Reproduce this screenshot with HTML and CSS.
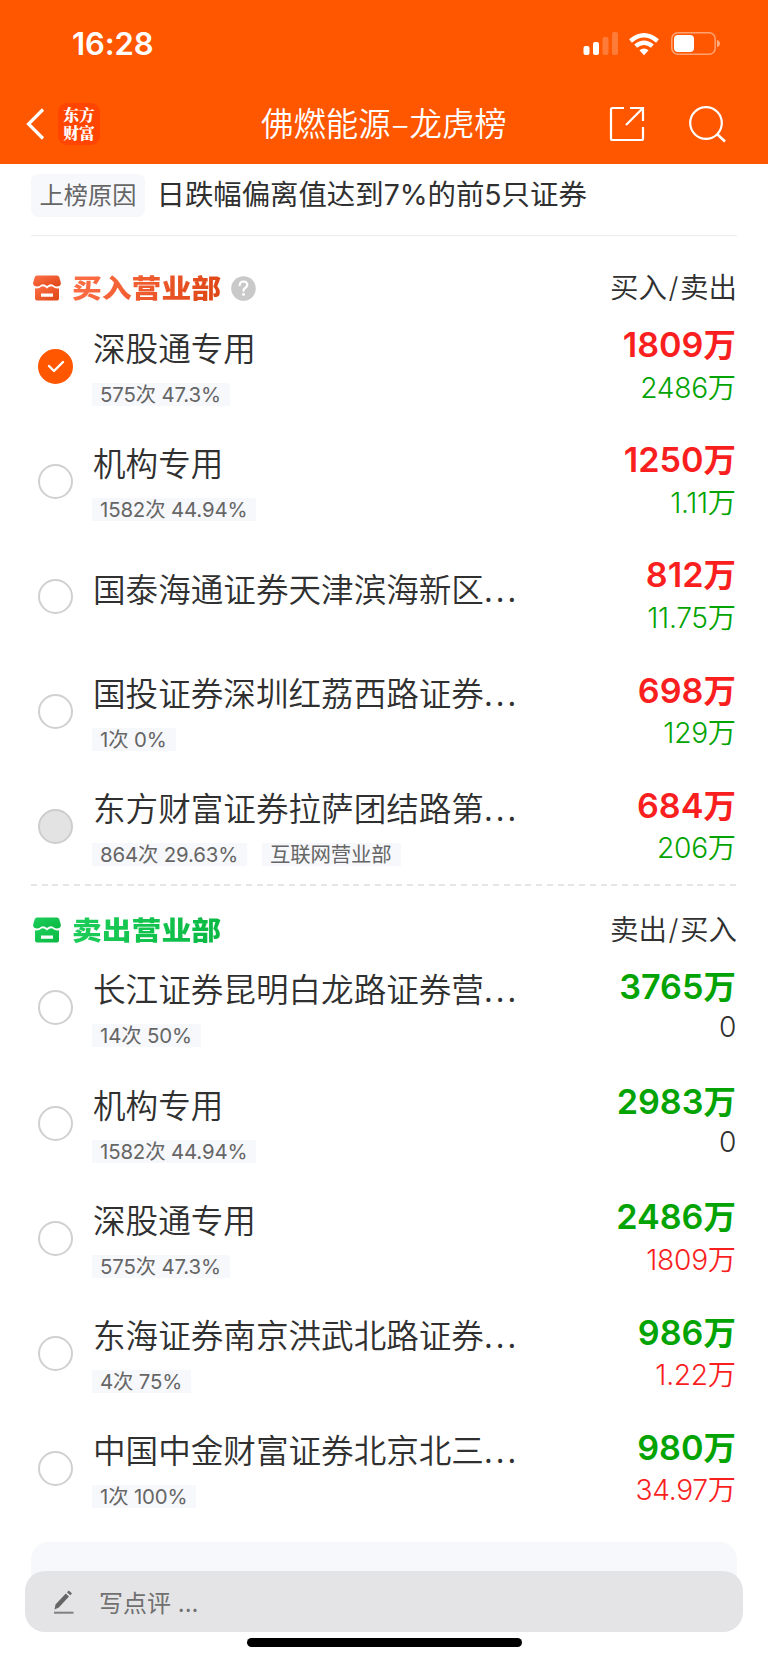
FILE: index.html
```html
<!DOCTYPE html>
<html lang="zh-CN">
<head>
<meta charset="utf-8">
<title>佛燃能源–龙虎榜</title>
<link rel="stylesheet" href="styles.css">
</head>
<body>
<svg class="defs" width="0" height="0" aria-hidden="true">
  <defs>
    <linearGradient id="gbuy" x1="0" y1="0" x2="1" y2="1"><stop offset="0" stop-color="#ff7048"/><stop offset="1" stop-color="#dd4513"/></linearGradient>
    <linearGradient id="gsell" x1="0" y1="0" x2="1" y2="1"><stop offset="0" stop-color="#1dce5a"/><stop offset="1" stop-color="#08b842"/></linearGradient>
    <symbol id="shop" viewBox="0 0 28 26">
      <path d="M4 .5h20q1.600 0 2.200 1.500l1.600 5.500q.5 3.500-3.300 4-2.800 0-4.300-1.500-2.700-2-6.200 1-3.500-3-6.200-1Q6.300 11.500 3.500 11.500-.3 11 .2 7.500L1.800 2Q2.400.5 4 .5z"/>
      <path fill-rule="evenodd" d="M2 13.200q3.500.8 6.500-1.700 2.500-.8 5.500 2 3-2.800 5.500-2 3 2.500 6.500 1.700v10.300q0 2-2 2H4q-2 0-2-2zM8 18.500v3.200h12v-3.200z"/>
    </symbol>
  </defs>
</svg>
<div class="screen">
  <header class="top">
    <div class="status">
      <span class="time">16:28</span>
      <svg class="signal" width="36" height="24" viewBox="0 0 36 24" fill="#fff"><rect x=".5" y="14" width="6" height="9" rx="2"/><rect x="10" y="10" width="6" height="13" rx="2"/><g opacity=".22"><rect x="19.500" y="5" width="6" height="18" rx="2"/><rect x="29" y="0" width="6" height="23" rx="2"/></g></svg>
      <svg class="wifi" width="30" height="23" viewBox="0 0 30 23" fill="none" stroke="#fff" stroke-width="4.300"><path d="M1.500 8Q15-3.500 28.500 8"/><path d="M6.600 13.200q8.400-7 16.800 0"/><path d="M10.400 17.300q4.600-3.600 9.200 0L15 22.200z" fill="#fff" stroke="none"/></svg>
      <svg class="battery" width="49" height="24" viewBox="0 0 49 24"><rect x=".8" y=".8" width="43.400" height="21.400" rx="6" fill="none" stroke="#fff" stroke-opacity=".45" stroke-width="1.500"/><rect x="3" y="3" width="20" height="17" rx="4" fill="#fff"/><path d="M46 8q3 1 3 3.500T46 15z" fill="#fff" opacity=".5"/></svg>
    </div>
    <nav class="nav">
      <svg class="back" width="20" height="32" viewBox="0 0 20 32" fill="none" stroke="#fff" stroke-width="3.200"><path d="M17 1.500 2.500 16 17 30.500"/></svg>
      <div class="logo">东方<br>财富</div>
      <h1>佛燃能源<span class="dash">–</span>龙虎榜</h1>
      <svg class="share" width="36" height="36" viewBox="0 0 36 36" fill="none" stroke="#fff" stroke-width="2.200"><path d="M15 2H3.500Q2 2 2 3.500v29Q2 34 3.500 34h29q1.500 0 1.500-1.500V21M21 2h13v13M33.500 2.500 17 19"/></svg>
      <svg class="search" width="37" height="37" viewBox="0 0 37 37" fill="none" stroke="#fff" stroke-width="2.200"><circle cx="17" cy="17" r="15.800"/><path d="m28 28 8 7.500" stroke-width="2.600"/></svg>
    </nav>
  </header>
  <main>
    <div class="reason"><span class="badge">上榜原因</span><p>日跌幅偏离值达到7%的前5只证券</p></div>

    <section class="buy">
      <div class="head"><svg class="shop" width="28" height="26" fill="url(#gbuy)"><use href="#shop"/></svg><h2>买入营业部</h2><svg class="help" width="25" height="25" viewBox="0 0 25 25"><circle cx="12.500" cy="12.500" r="12.300" fill="#c9c9c9"/><path d="M8.700 9.200q.2-3.700 3.800-3.700t3.800 3.300q0 1.700-1.900 3-1.900 1.200-1.900 3" fill="none" stroke="#fff" stroke-width="2.200" stroke-linecap="round"/><circle cx="12.500" cy="18.500" r="1.400" fill="#fff"/></svg><span class="cols">买入<s>/</s>卖出</span></div>
      <div class="row"><i class="radio on"><svg width="18" height="13" viewBox="0 0 18 13" fill="none" stroke="#fff" stroke-width="2.400" stroke-linecap="round" stroke-linejoin="round"><path d="m2 6 5 5 9-9"/></svg></i><div class="info"><p class="name">深股通专用</p><div class="tags"><span>575次 47.3%</span></div></div><div class="vals"><b>1809<em>万</em></b><span>2486<em>万</em></span></div></div>
      <div class="row"><i class="radio"></i><div class="info"><p class="name">机构专用</p><div class="tags"><span>1582次 44.94%</span></div></div><div class="vals"><b>1250<em>万</em></b><span>1.11<em>万</em></span></div></div>
      <div class="row"><i class="radio"></i><div class="info"><p class="name">国泰海通证券天津滨海新区<u>...</u></p></div><div class="vals"><b>812<em>万</em></b><span>11.75<em>万</em></span></div></div>
      <div class="row"><i class="radio"></i><div class="info"><p class="name">国投证券深圳红荔西路证券<u>...</u></p><div class="tags"><span>1次 0%</span></div></div><div class="vals"><b>698<em>万</em></b><span>129<em>万</em></span></div></div>
      <div class="row"><i class="radio off"></i><div class="info"><p class="name">东方财富证券拉萨团结路第<u>...</u></p><div class="tags"><span>864次 29.63%</span><span class="kind">互联网营业部</span></div></div><div class="vals"><b>684<em>万</em></b><span>206<em>万</em></span></div></div>
    </section>

    <div class="dashes"></div>

    <section class="sell">
      <div class="head"><svg class="shop" width="28" height="26" fill="url(#gsell)"><use href="#shop"/></svg><h2>卖出营业部</h2><span class="cols">卖出<s>/</s>买入</span></div>
      <div class="row"><i class="radio"></i><div class="info"><p class="name">长江证券昆明白龙路证券营<u>...</u></p><div class="tags"><span>14次 50%</span></div></div><div class="vals"><b>3765<em>万</em></b><span class="zero">0</span></div></div>
      <div class="row"><i class="radio"></i><div class="info"><p class="name">机构专用</p><div class="tags"><span>1582次 44.94%</span></div></div><div class="vals"><b>2983<em>万</em></b><span class="zero">0</span></div></div>
      <div class="row"><i class="radio"></i><div class="info"><p class="name">深股通专用</p><div class="tags"><span>575次 47.3%</span></div></div><div class="vals"><b>2486<em>万</em></b><span>1809<em>万</em></span></div></div>
      <div class="row"><i class="radio"></i><div class="info"><p class="name">东海证券南京洪武北路证券<u>...</u></p><div class="tags"><span>4次 75%</span></div></div><div class="vals"><b>986<em>万</em></b><span>1.22<em>万</em></span></div></div>
      <div class="row"><i class="radio"></i><div class="info"><p class="name">中国中金财富证券北京北三<u>...</u></p><div class="tags"><span>1次 100%</span></div></div><div class="vals"><b>980<em>万</em></b><span>34.97<em>万</em></span></div></div>
    </section>
    <div class="card"></div>
  </main>
  <footer>
    <div class="comment"><svg width="20" height="24" viewBox="0 0 20 24" fill="#666"><path d="M.5 19.500 1.500 14.500 11.800 3.400l3.200 3L4.800 17.500zM13 2.200 14.800.4l3.200 3-1.800 1.900z"/><path d="M0 21.700h19.500v2H0z" opacity=".8"/></svg><span>写点评 ...</span></div>
    <div class="home"></div>
  </footer>
</div>
</body>
</html>
```
FILE: styles.css
```css
* { box-sizing: border-box; margin: 0; padding: 0; }
body { background: #fff; color: #303030; font-family: Inter, "Noto Sans CJK SC", sans-serif; }
em, i { font-style: normal; }
.defs { display: block; height: 0; }
.screen { width: 768px; height: 1662px; display: flex; flex-direction: column; overflow: hidden; }

.top { height: 163.500px; flex: none; background: #ff5700; color: #fff; display: flex; flex-direction: column; }
.status { height: 86px; padding: 2px 48px 0 72px; display: flex; align-items: center; }
.time { font-size: 31px; font-weight: 600; letter-spacing: -.1px; line-height: 36px; }
.signal { margin-left: auto; }
.wifi { margin-left: 10px; }
.battery { margin-left: 12px; }
.nav { height: 76px; padding: 0 42px 0 26px; display: flex; align-items: center; }
.logo { width: 42px; height: 42px; margin-left: 12px; padding-top: 3px; border-radius: 9px; background: #ff4500; text-align: center; font: 900 15.800px/17.500px "Noto Serif CJK SC", "Noto Sans CJK SC", sans-serif; }
.nav h1 { margin: -4px 0 0 161px; font: 350 32.400px/44px "Noto Sans CJK SC", sans-serif; white-space: nowrap; }
.dash { display: inline-block; width: 19px; text-align: center; }
.share { margin-left: auto; }
.search { margin-left: 44px; }

main { flex: none; padding: 0 31px; }
.reason { height: 72px; border-bottom: 1px solid #ececec; display: flex; align-items: flex-start; padding-top: 10px; }
.badge { width: 114px; height: 43px; border-radius: 7px; background: #f7f8fb; color: #666; font-size: 24.200px; line-height: 43px; text-align: center; }
.reason p { margin-left: 11.500px; font-size: 28.400px; line-height: 42px; font-weight: 375; white-space: nowrap; }

.head { display: flex; align-items: center; padding-left: 2px; }
.buy .head { height: 73px; padding-top: 32px; }
.sell .head { height: 64px; padding-top: 23px; }
.head h2 { margin-left: 11px; font: 900 29.800px/36px "Noto Sans CJK SC", sans-serif; color: transparent; background: linear-gradient(110deg, #ff7048, #dd4513); -webkit-background-clip: text; background-clip: text; transform: translateY(-1px) scaleY(.88); }
.sell h2 { background-image: linear-gradient(110deg, #1dce5a, #08b842); }
.help { margin-left: 10px; }
.cols { margin-left: auto; font-size: 28.500px; line-height: 36px; font-weight: 350; }
.cols s { text-decoration: none; margin: 0 1.500px; }

.row { height: 115.200px; display: flex; padding: 0 1px 0 7px; }
.radio { width: 35px; height: 35px; margin-top: 40px; flex: none; border: 2px solid #d0d0d0; border-radius: 50%; display: flex; align-items: center; justify-content: center; }
.radio.on { background: #ff5700; border-color: #ff5700; }
.radio.off { background: #e3e3e3; border-color: #cdcdcd; }
.info { height: 97px; margin-left: 20px; padding-top: 18px; display: flex; flex-direction: column; justify-content: center; }
.name { height: 40px; margin-bottom: 16px; font: 350 32.600px/40px "Noto Sans CJK SC", sans-serif; white-space: nowrap; }
.name u { text-decoration: none; letter-spacing: 3px; }
.tags { height: 23px; margin-left: -1px; display: flex; gap: 15px; }
.tags span { padding: 0 9px 0 8px; background: #f7f8fb; color: #666; font-size: 20.400px; font-weight: 380; letter-spacing: -.15px; line-height: 23px; white-space: nowrap; }
.vals { margin-left: auto; padding-top: 13.500px; display: flex; flex-direction: column; align-items: flex-end; }
.vals b, .vals span { height: 41.600px; line-height: 41.600px; white-space: nowrap; }
.vals b { font-size: 34.200px; font-weight: 600; }
.vals b em { font-size: 32.500px; font-weight: 700; }
.vals span { margin-top: 1px; font-size: 28.200px; font-weight: 360; letter-spacing: -.3px; }
.vals em { font-family: "Noto Sans CJK SC", sans-serif; font-weight: 350; letter-spacing: 0; }
.buy b, .sell .vals span { color: #f91f1f; }
.sell b, .buy .vals span { color: #02a302; }
.sell .vals .zero { color: #303030; }
.dashes { height: 2px; background: repeating-linear-gradient(90deg, #e5e5e5 0 6px, transparent 6px 10.750px); }
.card { height: 60px; margin-top: 16px; border-radius: 17px; background: #f7f8fb; }

footer { position: relative; margin-top: -31.500px; padding: 0 25px; background: linear-gradient(transparent 31px, #fff 31px); flex: 1; }
.comment { height: 61px; border-radius: 20px; background: #e4e4e6; color: #707070; display: flex; align-items: center; padding: 2px 0 0 29px; font-size: 24px; }
.comment span { margin: -2px 0 0 25px; }
.home { width: 275px; height: 9px; margin: 6px auto 0; border-radius: 5px; background: #000; }
```
